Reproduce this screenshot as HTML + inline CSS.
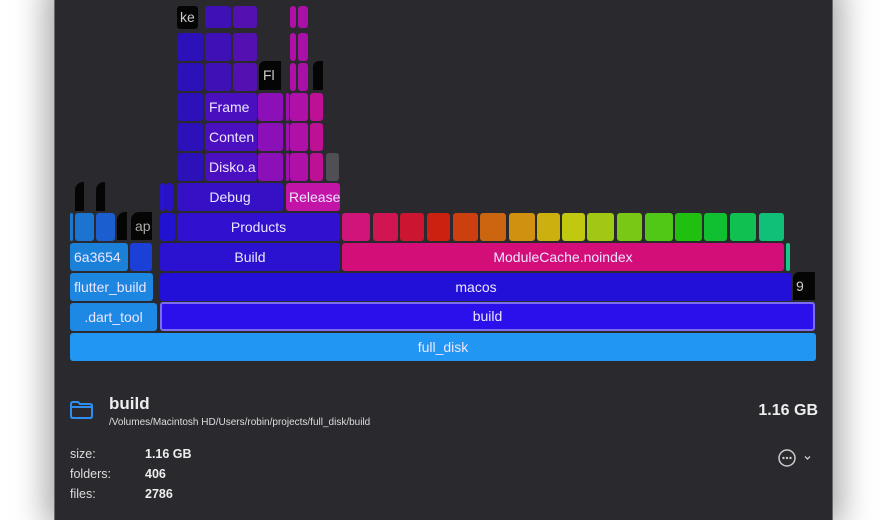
<!DOCTYPE html>
<html><head><meta charset="utf-8"><style>
html,body{margin:0;padding:0;width:888px;height:500px;overflow:hidden;background:#fff;font-family:"Liberation Sans",sans-serif}
.win{position:absolute;left:54px;top:-10px;width:779px;height:530px;background:#2a292e;box-shadow:0 0 30px 8px rgba(0,0,0,.35);border-left:1px solid #6a6a6e;border-right:1px solid #6a6a6e;box-sizing:border-box}
.b{position:absolute;height:28px;border-radius:3px;color:#ece6ff;font-size:14px;line-height:28px;text-align:center;overflow:hidden;white-space:nowrap}
.l{text-align:left;padding-left:4px;box-sizing:border-box}
.k{background:#050505;color:#ccc;border-radius:5px 5px 0 0}
</style></head><body>
<div class="win"></div>
<div class="b" style="left:70px;top:333px;width:746px;background:#2196f3">full_disk</div>
<div class="b" style="left:70px;top:303px;width:87px;background:#1e88e5">.dart_tool</div>
<div class="b" style="left:160px;top:302px;width:655px;height:29px;background:#2a10ea;border:2px solid #7b6cf0;box-sizing:border-box;line-height:25px">build</div>
<div class="b l" style="left:70px;top:273px;width:83px;background:#1c86e0">flutter_build</div>
<div class="b" style="left:160px;top:273px;width:632px;background:#2210d8">macos</div>
<div class="b k l" style="left:793px;top:272px;width:22px;border-radius:6px 0 0 0;padding-left:3px">9</div>
<div class="b l" style="left:70px;top:243px;width:58px;background:#1a80d8">6a3654</div>
<div class="b" style="left:130px;top:243px;width:22px;background:#1a40d8"></div>
<div class="b" style="left:160px;top:243px;width:180px;background:#2a12d0">Build</div>
<div class="b" style="left:342px;top:243px;width:442px;background:#d30e78">ModuleCache.noindex</div>
<div class="b" style="left:786px;top:243px;width:4px;background:#18c888"></div>
<div class="b" style="left:70px;top:213px;width:3px;background:#1a78d0"></div>
<div class="b" style="left:75px;top:213px;width:19px;background:#1a74d0"></div>
<div class="b" style="left:96px;top:213px;width:19px;background:#1a5ed0"></div>
<div class="b k" style="left:117px;top:212px;width:10px;border-radius:8px 0 0 0"></div>
<div class="b k l" style="left:131px;top:212px;width:21px;border-radius:8px 0 0 0;color:#aaa">ap</div>
<div class="b" style="left:160px;top:213px;width:15px;background:#2012d0"></div>
<div class="b" style="left:177px;top:213px;width:163px;background:#3210d0">Products</div>
<div class="b k" style="left:75px;top:182px;width:9px;height:29px;border-radius:8px 0 0 0"></div>
<div class="b k" style="left:96px;top:182px;width:9px;height:29px;border-radius:8px 0 0 0"></div>
<div class="b" style="left:160px;top:183px;width:5px;background:#2a14c8"></div>
<div class="b" style="left:166px;top:183px;width:7px;background:#2a12c8"></div>
<div class="b" style="left:177px;top:183px;width:106px;background:#3510c5">Debug</div>
<div class="b l" style="left:286px;top:183px;width:54px;background:#c314a8;padding-left:3px">Release</div>
<div class="b" style="left:177px;top:153px;width:26px;background:#2c10b8"></div>
<div class="b" style="left:177px;top:123px;width:26px;background:#2c10b8"></div>
<div class="b" style="left:177px;top:93px;width:26px;background:#2c10b8"></div>
<div class="b" style="left:177px;top:63px;width:26px;background:#2c10b8"></div>
<div class="b" style="left:177px;top:33px;width:26px;background:#2c10b8"></div>
<div class="b k l" style="left:177px;top:6px;width:21px;height:23px;line-height:23px;border-radius:3px;padding-left:3px">ke</div>
<div class="b l" style="left:205px;top:153px;width:52px;background:#4a10c0">Disko.a</div>
<div class="b l" style="left:205px;top:123px;width:52px;background:#4a10c0">Conten</div>
<div class="b l" style="left:205px;top:93px;width:52px;background:#4a10c0">Frame</div>
<div class="b" style="left:205px;top:63px;width:26px;background:#3e10b5"></div>
<div class="b" style="left:205px;top:33px;width:26px;background:#3e10b5"></div>
<div class="b" style="left:205px;top:6px;width:26px;height:22px;background:#3e10b5"></div>
<div class="b" style="left:233px;top:63px;width:24px;background:#5410b0"></div>
<div class="b" style="left:233px;top:33px;width:24px;background:#5410b0"></div>
<div class="b" style="left:233px;top:6px;width:24px;height:22px;background:#5410b0"></div>
<div class="b" style="left:258px;top:153px;width:25px;background:#8c10b8"></div>
<div class="b" style="left:258px;top:123px;width:25px;background:#8c10b8"></div>
<div class="b" style="left:258px;top:93px;width:25px;background:#8c10b8"></div>
<div class="b k l" style="left:259px;top:61px;width:22px;height:29px;border-radius:6px 0 0 0">Fl</div>
<div class="b" style="left:286px;top:93px;width:3px;background:#a010b0"></div>
<div class="b" style="left:286px;top:123px;width:3px;background:#a010b0"></div>
<div class="b" style="left:286px;top:153px;width:3px;background:#a010b0"></div>
<div class="b" style="left:290px;top:93px;width:18px;background:#b010a8"></div>
<div class="b" style="left:290px;top:123px;width:18px;background:#b010a8"></div>
<div class="b" style="left:290px;top:153px;width:18px;background:#b010a8"></div>
<div class="b" style="left:290px;top:63px;width:6px;background:#b010a8"></div>
<div class="b" style="left:298px;top:63px;width:10px;background:#a810a8"></div>
<div class="b" style="left:290px;top:33px;width:6px;background:#b010a8"></div>
<div class="b" style="left:298px;top:33px;width:10px;background:#a810a8"></div>
<div class="b" style="left:290px;top:6px;width:6px;height:22px;background:#b010a8"></div>
<div class="b" style="left:298px;top:6px;width:10px;height:22px;background:#a810a8"></div>
<div class="b" style="left:310px;top:93px;width:13px;background:#bd1095"></div>
<div class="b" style="left:310px;top:123px;width:13px;background:#bd1095"></div>
<div class="b" style="left:310px;top:153px;width:13px;background:#bd1095"></div>
<div class="b k" style="left:313px;top:61px;width:10px;height:29px;border-radius:6px 0 0 0"></div>
<div class="b" style="left:326px;top:153px;width:13px;background:#505054"></div>
<div class="b" style="left:342px;top:213px;width:28px;background:#d0157a"></div>
<div class="b" style="left:373px;top:213px;width:25px;background:#d01552"></div>
<div class="b" style="left:400px;top:213px;width:24px;background:#cc1530"></div>
<div class="b" style="left:427px;top:213px;width:23px;background:#cc2010"></div>
<div class="b" style="left:453px;top:213px;width:25px;background:#cc4010"></div>
<div class="b" style="left:480px;top:213px;width:26px;background:#cc6510"></div>
<div class="b" style="left:509px;top:213px;width:26px;background:#d09010"></div>
<div class="b" style="left:537px;top:213px;width:23px;background:#ccb010"></div>
<div class="b" style="left:562px;top:213px;width:23px;background:#c0c810"></div>
<div class="b" style="left:587px;top:213px;width:27px;background:#a0c815"></div>
<div class="b" style="left:617px;top:213px;width:25px;background:#78c815"></div>
<div class="b" style="left:645px;top:213px;width:28px;background:#50c815"></div>
<div class="b" style="left:675px;top:213px;width:27px;background:#20c010"></div>
<div class="b" style="left:704px;top:213px;width:23px;background:#10c030"></div>
<div class="b" style="left:730px;top:213px;width:26px;background:#10c050"></div>
<div class="b" style="left:759px;top:213px;width:25px;background:#10c078"></div>
<svg style="position:absolute;left:69px;top:400px" width="25" height="20" viewBox="0 0 25 20"><path d="M2 4 Q2 2 4 2 H9 L11 4 H21 Q23 4 23 6 V16 Q23 18 21 18 H4 Q2 18 2 16 Z M2 7 H23" fill="none" stroke="#2f8ff0" stroke-width="2"/></svg>
<div style="position:absolute;left:109px;top:394px;color:#eee;font-weight:bold;font-size:17px">build</div>
<div style="position:absolute;left:109px;top:417px;color:#ddd;font-size:10px">/Volumes/Macintosh HD/Users/robin/projects/full_disk/build</div>
<div style="position:absolute;right:70px;top:402px;color:#eee;font-weight:bold;font-size:16px">1.16 GB</div>
<div style="position:absolute;left:70px;top:444px;color:#ddd;font-size:12.5px;line-height:20px">size:<br>folders:<br>files:</div>
<div style="position:absolute;left:145px;top:444px;color:#eee;font-weight:bold;font-size:12.5px;line-height:20px">1.16 GB<br>406<br>2786</div>
<svg style="position:absolute;left:777px;top:448px" width="40" height="20" viewBox="0 0 40 20"><circle cx="10" cy="10" r="8" fill="none" stroke="#ccc" stroke-width="1.5"/><circle cx="6.5" cy="10" r="1.2" fill="#ccc"/><circle cx="10" cy="10" r="1.2" fill="#ccc"/><circle cx="13.5" cy="10" r="1.2" fill="#ccc"/><path d="M28 8.5 L30.5 11 L33 8.5" fill="none" stroke="#ccc" stroke-width="1.3"/></svg>
</body></html>
